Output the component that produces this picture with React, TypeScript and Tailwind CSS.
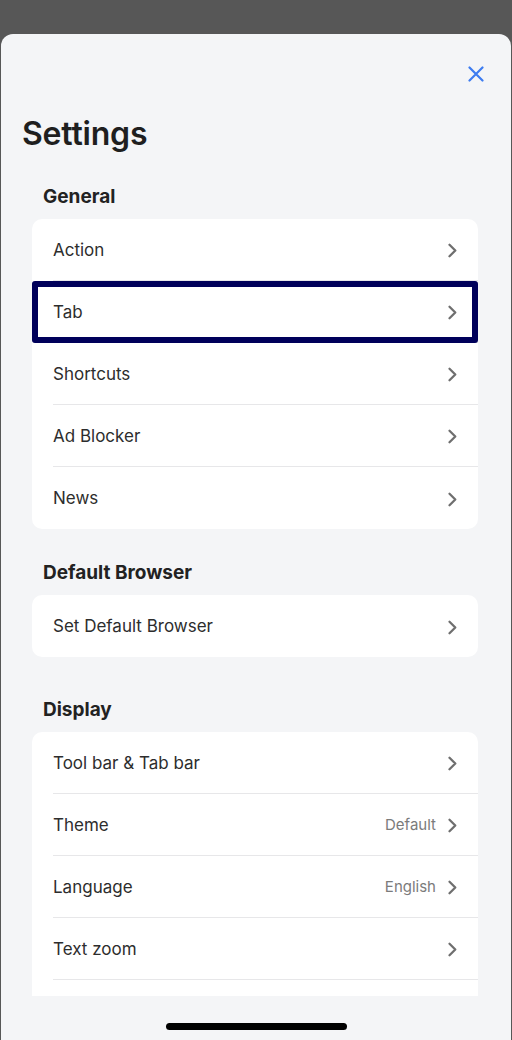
import React from 'react';

type Row = { label: string; value?: string; focused?: boolean };

const sections: { title: string; gap: string; rows: Row[] }[] = [
  {
    title: 'General',
    gap: 'mt-[32px]',
    rows: [
      { label: 'Action' },
      { label: 'Tab', focused: true },
      { label: 'Shortcuts' },
      { label: 'Ad Blocker' },
      { label: 'News' },
    ],
  },
  {
    title: 'Default Browser',
    gap: 'mt-[32px]',
    rows: [{ label: 'Set Default Browser' }],
  },
  {
    title: 'Display',
    gap: 'mt-[41px]',
    rows: [
      { label: 'Tool bar & Tab bar' },
      { label: 'Theme', value: 'Default' },
      { label: 'Language', value: 'English' },
      { label: 'Text zoom' },
      { label: '' },
    ],
  },
];

const Chevron = () => (
  <svg width="11" height="15" viewBox="0 0 11 15" fill="none" className="shrink-0">
    <path d="M2.5 1.8 L8.3 7.5 L2.5 13.2" stroke="#6f6f6f" strokeWidth="2.3" strokeLinecap="round" strokeLinejoin="round" />
  </svg>
);

const App: React.FC = () => {
  return (
    <div className="w-[512px] h-[1040px] bg-[#575757] pt-[34px] px-[1px] overflow-hidden" style={{ fontFamily: 'Inter, "Noto Sans", sans-serif' }}>
      <div className="h-full bg-[#f4f5f7] rounded-t-[12px] flex flex-col overflow-hidden">
        <div className="h-[962px] overflow-hidden">
          <div className="mt-[26px] h-[28px] flex justify-end pr-[27px]">
            <svg width="16" height="16" viewBox="0 0 16 16" fill="none" className="self-center">
              <path d="M1.5 1.5 L14.5 14.5 M14.5 1.5 L1.5 14.5" stroke="#3d7cf0" strokeWidth="2.2" strokeLinecap="round" />
            </svg>
          </div>
          <h1 className="mt-[27px] ml-[21px] text-[32px] leading-[38px] font-semibold text-[#1f1f1f] tracking-[-0.2px]">Settings</h1>

          {sections.map((s) => (
            <div key={s.title} className={s.gap}>
              <h2 className="ml-[42px] text-[19px] leading-[24px] font-bold text-[#222]">{s.title}</h2>
              <div className="mt-[10px] ml-[31px] w-[446px] bg-white rounded-[10px]">
                {s.rows.map((r, i) => (
                  <div key={r.label + i} className="relative h-[62px] flex pl-[21px]">
                    <div className={`flex-1 flex items-center pt-[2px] pr-[21px] ${i < s.rows.length - 1 ? 'border-b border-[#e7e7e9]' : ''}`}>
                      {r.label && (
                        <>
                          <span className="flex-1 text-[17px] text-[#2d2d2d]">{r.label}</span>
                          {r.value && <span className="mr-[10px] text-[15px] text-[#7b7b7b]">{r.value}</span>}
                          <span className="translate-x-[1px]"><Chevron /></span>
                        </>
                      )}
                    </div>
                    {r.focused && (
                      <div className="absolute inset-0 border-[6px] border-[#00005a] rounded-[3px]" />
                    )}
                  </div>
                ))}
              </div>
            </div>
          ))}
        </div>
        <div className="flex-1 flex justify-center pt-[27px]">
          <div className="w-[181px] h-[7px] rounded-full bg-black" />
        </div>
      </div>
    </div>
  );
};

export default App;
